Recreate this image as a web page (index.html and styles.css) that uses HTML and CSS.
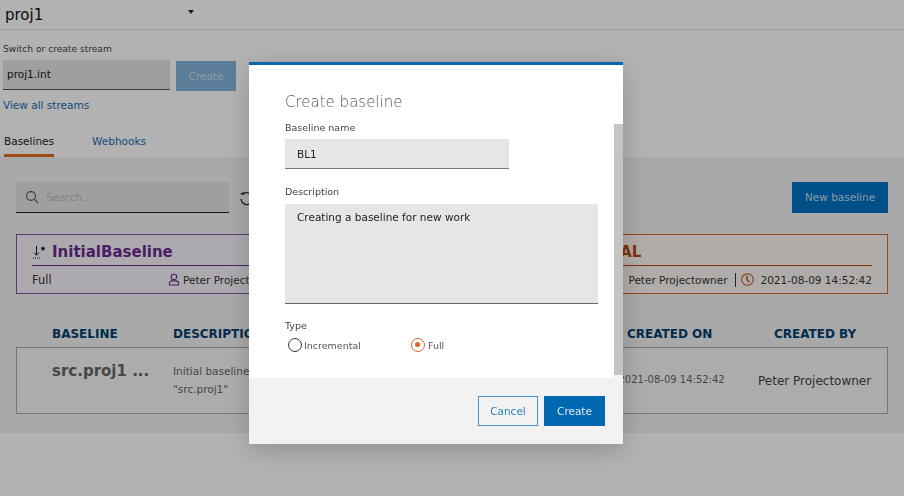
FILE: index.html
```html
<!DOCTYPE html>
<html lang="en">
<head>
<meta charset="utf-8">
<title>Create baseline</title>
<link rel="stylesheet" href="styles.css">
</head>
<body>
<div class="page">
  <header class="topbar">
    <span class="project">proj1</span>
    <span class="caret"></span>
  </header>
  <section class="stream">
    <label class="stream-label">Switch or create stream</label>
    <div class="stream-row">
      <div class="stream-input">proj1.int</div>
      <div class="btn-disabled">Create</div>
    </div>
    <a class="link">View all streams</a>
  </section>
  <nav class="tabs">
    <span class="tab active">Baselines</span>
    <span class="tab">Webhooks</span>
  </nav>
  <main class="content">
    <div class="toolbar">
      <div class="search">
        <svg class="search-icon" width="14" height="14" viewBox="0 0 14 14" fill="none" stroke="#555" stroke-width="1.1"><circle cx="6" cy="6" r="4.4"/><path d="M9.2 9.2 13 13"/></svg>
        <span>Search...</span>
      </div>
      <svg class="refresh" width="16" height="16" viewBox="0 0 16 16" fill="none" stroke="#222" stroke-width="1.2"><path d="M4 3.2A6 6 0 1 1 2 8"/><path d="M1.5 2.5 4 3.2 4.6 1"/></svg>
      <div class="btn-new">New baseline</div>
    </div>
    <div class="cards">
      <div class="card purple">
        <div class="card-title">
          <svg width="15" height="16" viewBox="0 0 15 16" fill="none" stroke="#222" stroke-width="1"><path d="M4.5 2v9M2 8.6l2.500 2.600L7 8.600"/><path d="M1 14h7" stroke-dasharray="1 1"/><path d="M11 2l.8 1.600 1.700.2-1.200 1.200.3 1.700-1.600-.8-1.600.8.3-1.700-1.200-1.200 1.700-.2z" fill="#222" stroke="none"/></svg>
          <span>InitialBaseline</span>
        </div>
        <div class="card-meta">
          <span class="card-type">Full</span>
          <span class="meta-right">
            <svg width="12" height="13" viewBox="0 0 13 13" fill="none" stroke="#6a2c91" stroke-width="1.2"><circle cx="6.500" cy="3.800" r="3"/><path d="M1.500 12.400V11c0-1.700 1.400-3 3-3h4c1.600 0 3 1.300 3 3v1.400z"/></svg>
            Peter Projectowner
          </span>
        </div>
      </div>
      <div class="card orange">
        <div class="card-title">
          <svg width="15" height="16" viewBox="0 0 15 16" fill="none" stroke="#222" stroke-width="1"><path d="M4.500 2v9M2 8.600l2.500 2.600L7 8.600"/><path d="M1 14h7" stroke-dasharray="1 1"/></svg>
          <span>proj1.int_INITIAL</span>
        </div>
        <div class="card-meta end">
          <span class="meta-right">
            <svg class="owner-icon" width="12" height="13" viewBox="0 0 13 13" fill="none" stroke="#c8501a" stroke-width="1.2"><circle cx="6.500" cy="3.800" r="3"/><path d="M1.500 12.400V11c0-1.700 1.400-3 3-3h4c1.600 0 3 1.300 3 3v1.400z"/></svg>
            Peter Projectowner
            <span class="sep"></span>
            <svg class="clock-icon" width="13" height="13" viewBox="0 0 13 13" fill="none" stroke="#c8501a" stroke-width="1.100"><circle cx="6.500" cy="6.500" r="5.800"/><path d="M6 2.800v4l2.400 2.400" stroke-width="1.500"/></svg>
            2021-08-09 14:52:42
          </span>
        </div>
      </div>
    </div>
    <div class="table-head">
      <span class="col-a">BASELINE</span>
      <span class="col-b">DESCRIPTION</span>
      <span class="col-c">CREATED ON</span>
      <span class="col-d">CREATED BY</span>
    </div>
    <div class="table-row">
      <div class="col-a row-name">src.proj1 ...</div>
      <div class="col-b row-desc">Initial baseline for stream<br>"src.proj1"</div>
      <div class="col-c row-date">2021-08-09 14:52:42</div>
      <div class="col-d row-owner">Peter Projectowner</div>
    </div>
  </main>
</div>
<div class="overlay"></div>
<div class="modal">
  <div class="scrollthumb"></div>
  <div class="modal-body">
    <h1 class="modal-title">Create baseline</h1>
    <label class="field-label">Baseline name</label>
    <div class="field-input">BL1</div>
    <label class="field-label desc-label">Description</label>
    <div class="field-area">Creating a baseline for new work</div>
    <label class="field-label type-label">Type</label>
    <div class="radios">
      <span class="radio-item first"><span class="radio"></span>Incremental</span>
      <span class="radio-item"><span class="radio checked"></span>Full</span>
    </div>
  </div>
  <div class="modal-footer">
    <div class="btn-cancel">Cancel</div>
    <div class="btn-create">Create</div>
  </div>
</div>
</body>
</html>
```
FILE: styles.css
```css
* { box-sizing: border-box; }
html, body { margin: 0; height: 100%; }
body {
  font-family: "DejaVu Sans", sans-serif;
  background: #fff;
  color: #222;
  overflow: hidden;
}
.page { display: flex; flex-direction: column; height: 496px; }

.topbar {
  height: 30px;
  flex: none;
  display: flex;
  align-items: center;
  padding-left: 5px;
  border-bottom: 1px solid #e4e4e4;
}
.project { font-size: 15px; width: 183px; color: #111; }
.caret {
  width: 0; height: 0;
  border-left: 3.5px solid transparent;
  border-right: 3.5px solid transparent;
  border-top: 4px solid #222;
  margin-bottom: 5px;
}

.stream { padding: 13px 0 0 3px; flex: none; height: 95px; }
.stream-label { display: block; font-size: 9.1px; line-height: 12px; color: #444; }
.stream-row { display: flex; gap: 6px; margin-top: 5px; align-items: flex-start; }
.stream-input {
  width: 167px; height: 30px;
  background: #e4e4e4;
  border-bottom: 1px solid #555;
  font-size: 10.5px;
  line-height: 29px;
  padding-left: 4px;
  color: #222;
}
.btn-disabled {
  width: 60px; height: 30px; margin-top: 1px;
  background: #85b4dc;
  color: #c8dcee;
  font-size: 10.5px;
  line-height: 30px;
  text-align: center;
}
.link { display: block; font-size: 10.5px; line-height: 14px; margin-top: 7px; color: #1a6bb0; }

.tabs { display: flex; flex: none; height: 32px; padding-left: 4px; gap: 38px; }
.tab { font-size: 10.5px; line-height: 14px; padding-top: 9px; color: #1a6bb0; height: 32px; }
.tab.active { color: #222; border-bottom: 3px solid #e36a1c; height: 32px; }

.content { background: #f2f2f2; height: 276px; flex: none; padding: 25px 16px 0; }
.toolbar { display: flex; align-items: flex-start; }
.search {
  width: 213px; height: 31px;
  background: #e4e4e4;
  border-bottom: 1px solid #222;
  display: flex; align-items: center;
  padding-left: 9px;
  font-size: 10.5px;
  color: #bbb;
  gap: 7px;
}
.refresh { margin: 9px 0 0 10px; }
.btn-new {
  margin-left: auto;
  width: 96px; height: 31px;
  background: #0072c4;
  color: #c8dcee;
  font-size: 10.5px;
  line-height: 31px;
  text-align: center;
}

.cards { display: flex; gap: 25px; margin-top: 21px; }
.card { flex: 1; height: 60px; padding: 0 15px; border: 1px solid; background: #fff; }
.card.purple { border-color: #8a55b0; background: #f8f4fb; }
.card.orange { border-color: #d2683a; background: #fdf6f2; }
.card-title {
  height: 31px;
  display: flex; align-items: center; gap: 5px;
  padding-top: 3px;
  font-size: 15px; font-weight: bold;
  border-bottom: 1px solid;
}
.purple .card-title { color: #6a2c91; border-color: #6a2c91; }
.orange .card-title { color: #b8480f; border-color: #b8480f; }
.card-meta { display: flex; height: 27px; align-items: center; font-size: 10.5px; color: #333; }
.card-meta.end { justify-content: flex-end; }
.card-type { font-size: 11.5px; width: 136px; }
.meta-right { display: flex; align-items: center; gap: 3px; font-size: 10.5px; white-space: nowrap; }
.owner-icon { margin-right: 2px; }
.sep { width: 1px; height: 14px; background: #333; margin: 0 2px 0 5px; }
.clock-icon { margin-right: 3px; }

.table-head {
  display: flex;
  margin-top: 33px;
  height: 19px;
  font-size: 12px;
  font-weight: bold;
  color: #003f70;
  line-height: 14px;
}
.col-a { width: 157px; padding-left: 36px; flex: none; }
.col-b { width: 454px; flex: none; }
.col-c { width: 147px; flex: none; }
.col-d { flex: 1; }
.table-row {
  display: flex;
  height: 67px;
  border: 1px solid #aaa;
  background: #f6f6f6;
  margin-top: 1px;
}
.row-name { font-size: 15px; font-weight: bold; color: #666; padding-top: 14px; padding-left: 35px; }
.row-desc { font-size: 10.5px; line-height: 18px; color: #666; padding-top: 14px; margin-left: -1px; }
.row-date { font-size: 10px; color: #666; padding-top: 26px; margin-left: -8.5px; }
.row-owner { font-size: 12px; color: #444; padding-top: 26px; margin-left: -7.5px; }

.overlay { position: fixed; inset: 0; background: rgba(0, 0, 0, .3); }

.modal {
  position: fixed;
  left: 249px; top: 62px;
  width: 374px; height: 382px;
  background: #fff;
  border-top: 3px solid #0067b1;
  box-shadow: 0 6px 24px rgba(0, 0, 0, .2);
  display: flex; flex-direction: column;
}
.scrollthumb {
  position: absolute;
  right: 0; top: 59px;
  width: 9px; height: 251px;
  background: #c3c5c5;
}
.modal-body { flex: 1; padding: 28px 0 0 36px; }
.modal-title {
  margin: 0 0 11px;
  font-size: 15px; font-weight: 200; line-height: 18px;
  color: #555;
}
.field-label { display: block; font-size: 9.5px; line-height: 12px; color: #444; }
.field-input {
  width: 224px; height: 30px;
  margin-top: 5px;
  background: #e6e6e6;
  border-bottom: 1px solid #777;
  font-size: 10.5px;
  line-height: 30px;
  padding-left: 12px;
  color: #222;
}
.desc-label { margin-top: 17px; }
.field-area {
  width: 313px; height: 100px;
  margin-top: 6px;
  background: #e6e6e6;
  border-bottom: 1px solid #666;
  font-size: 10.5px;
  line-height: 14px;
  padding: 6px 12px;
  color: #222;
}
.type-label { margin-top: 16px; }
.radios { display: flex; font-size: 9.5px; color: #555; margin-top: 6px; margin-left: 3px; }
.radio-item { display: flex; align-items: center; gap: 2px; }
.radio-item.first { width: 123px; }
.radio {
  width: 14px; height: 14px;
  border-radius: 50%;
  border: 1.75px solid #333;
  background: #fff;
  display: block;
  position: relative;
}
.radio.checked { border-color: #d9661f; margin-right: 1px; }
.radio.checked::after {
  content: "";
  position: absolute;
  left: 2.75px; top: 2.75px;
  width: 5px; height: 5px;
  border-radius: 50%;
  background: #d9661f;
}
.modal-footer {
  height: 66px; flex: none;
  background: #f2f2f2;
  display: flex;
  justify-content: flex-end;
  gap: 6px;
  padding: 18px 18px 0 0;
  font-size: 10.5px;
  position: relative;
}
.modal-footer::before {
  content: "";
  position: absolute;
  right: 0; top: -3px;
  width: 9px; height: 3px;
  background: #f2f2f2;
}
.btn-cancel, .btn-create {
  width: 60px; height: 30px;
  text-align: center;
  line-height: 30px;
}
.btn-cancel { border: 1px solid #4a94cf; line-height: 28px; color: #2f80c0; }
.btn-create { width: 61px; background: #0067b1; color: #dfeaf4; }
```
